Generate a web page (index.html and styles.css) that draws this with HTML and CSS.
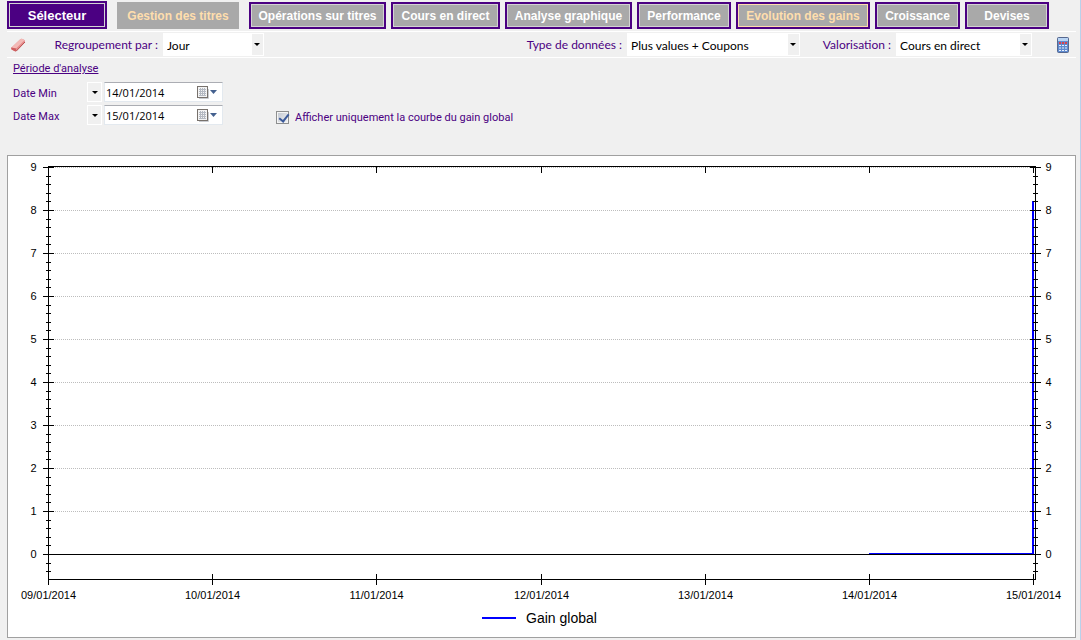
FILE: index.html
```html
<!DOCTYPE html>
<html lang="fr">
<head>
  <meta charset="UTF-8" />
  <meta name="viewport" content="width=device-width, initial-scale=1" />
  <title>Evolution des gains</title>
  <link rel="stylesheet" href="styles.css">
</head>
<body>
  <div class="page">

    <!-- Navigation -->
    <nav class="tabs">
      <button type="button" class="tab tab-main">Sélecteur</button>
      <button type="button" class="tab tab-flat">Gestion des titres</button>
      <button type="button" class="tab tab-operations">Opérations sur titres</button>
      <button type="button" class="tab tab-cours">Cours en direct</button>
      <button type="button" class="tab tab-analyse">Analyse graphique</button>
      <button type="button" class="tab tab-performance">Performance</button>
      <button type="button" class="tab tab-evolution active">Evolution des gains</button>
      <button type="button" class="tab tab-croissance">Croissance</button>
      <button type="button" class="tab tab-devises">Devises</button>
    </nav>

    <!-- Toolbar -->
    <div class="toolbar">
      <button type="button" class="icon-btn" aria-label="Effacer">
        <svg width="16" height="16" viewBox="0 0 16 16">
          <path d="M1 11 L10 2.500 Q11 1.500 12.500 2 L14.500 3 Q15.500 4 14.500 5.500 L7 13.500 Q6 14.500 4.500 14 L1.500 12.500 Z" fill="#e58a8a" />
          <path d="M1.500 10.500 L10 2.500 Q11 1.500 12.500 2 L14.500 3.200 L6 11.500 Z" fill="#f3b9b6" />
          <path d="M1.200 10.500 L6 11.500 L6 14.300 Q5 14.500 4 13.800 L1.500 12.500 Z" fill="#cf5f60" />
          <path d="M6 14.300 L15 5" stroke="#b95050" fill="none" />
        </svg>
      </button>
      <label class="bar-label label-group" for="group">Regroupement par :</label>
      <span class="combo combo-group">
        <select id="group"><option>Jour</option></select>
      </span>
      <label class="bar-label label-type" for="type">Type de données :</label>
      <span class="combo combo-type">
        <select id="type"><option>Plus values + Coupons</option></select>
      </span>
      <label class="bar-label label-value" for="value">Valorisation :</label>
      <span class="combo combo-value">
        <select id="value"><option>Cours en direct</option></select>
      </span>
      <button type="button" class="icon-btn calc" aria-label="Calculer">
        <svg width="12" height="16" viewBox="0 0 12 16">
          <rect x="0.500" y="0.500" width="11" height="15" rx="1" fill="#5f8bd0" stroke="#56688f" />
          <rect x="1" y="1" width="10" height="3" fill="#b9d4f4" />
          <path d="M2 6h2M5 6h2M8 6h2" stroke="#d8434f" stroke-width="2" />
          <path d="M2 8.500h2M5 8.500h2M8 8.500h2M2 11h2M5 11h2M8 11h2M2 13.500h2M5 13.500h2M8 13.500h2" stroke="#e8f0fb" />
        </svg>
      </button>
    </div>

    <!-- Filters -->
    <form class="filters">
      <a href="#" class="period">Période d'analyse</a>
      <div class="filter-row">
        <div class="dates">
          <label for="date-min">Date Min</label>
          <button type="button" class="drop" aria-label="Choix date min"></button>
          <span class="date-box">
            <input type="text" id="date-min" value="14/01/2014" />
            <svg class="date-icon" width="22" height="13" viewBox="0 0 22 13">
              <path d="M2 12.500h9.500V3" stroke="#c9ccd1" fill="none" />
              <rect x="0.500" y="0.500" width="10" height="11" fill="#f4f4f4" stroke="#77716c" />
              <path d="M2 3.500h7M2 5.500h7M2 7.500h7M2 9.500h7M3.500 2v8M5.500 2v8M7.500 2v8" stroke="#b4b9c2" />
              <path d="M13 4h7l-3.500 4z" fill="#44618f" />
            </svg>
          </span>
          <label for="date-max">Date Max</label>
          <button type="button" class="drop" aria-label="Choix date max"></button>
          <span class="date-box">
            <input type="text" id="date-max" value="15/01/2014" />
            <svg class="date-icon" width="22" height="13" viewBox="0 0 22 13">
              <path d="M2 12.500h9.500V3" stroke="#c9ccd1" fill="none" />
              <rect x="0.500" y="0.500" width="10" height="11" fill="#f4f4f4" stroke="#77716c" />
              <path d="M2 3.500h7M2 5.500h7M2 7.500h7M2 9.500h7M3.500 2v8M5.500 2v8M7.500 2v8" stroke="#b4b9c2" />
              <path d="M13 4h7l-3.500 4z" fill="#44618f" />
            </svg>
          </span>
        </div>
        <div class="check">
          <input type="checkbox" id="only-global" checked />
          <label for="only-global">Afficher uniquement la courbe du gain global</label>
        </div>
      </div>
    </form>

    <!-- Chart -->
    <div class="chart">
      <svg id="plot" class="plot"></svg>
      <div class="legend">
        <span class="legend-line"></span>
        <span>Gain global</span>
      </div>
    </div>

  </div>
  <script src="chart.js"></script>
</body>
</html>
```

FILE: styles.css
```css
* {
  box-sizing: border-box;
}
body {
  margin: 0;
  background: #f0f0f0;
  color: #000;
  font-family: "Liberation Sans", Arial, sans-serif;
  font-size: 11px;
}
button, input, select {
  font-family: inherit;
  margin: 0;
}
.page {
  min-height: 100vh;
  padding: 1px 4px 2px 7px;
  border-right: 1px solid #b9d1ea;
}

/* Navigation */
.tabs {
  display: flex;
  gap: 5px;
}
.tab {
  height: 27px;
  margin-top: 1px;
  padding: 0;
  background: #a9a9a9;
  border: 2px solid #4b0082;
  box-shadow: inset 0 0 0 1px #d3d3d3;
  color: #fff;
  font-size: 12px;
  font-weight: bold;
  white-space: nowrap;
}
.tab-main {
  width: 100px;
  height: 28px;
  margin: 0 5px 0 0;
  background: #4b0082;
  font-size: 13px;
}
.tab-flat {
  width: 122px;
  margin-right: 5px;
  border: none;
  box-shadow: none;
  color: #ffdead;
}
.tab-operations {
  width: 137px;
}
.tab-cours {
  width: 109px;
}
.tab-analyse {
  width: 127px;
}
.tab-performance {
  width: 94px;
}
.tab-evolution {
  width: 134px;
}
.tab-croissance {
  width: 85px;
}
.tab-devises {
  width: 84px;
}
.tab.active {
  box-shadow: inset 0 0 0 1px #ffdead;
  color: #ffdead;
}

/* Toolbar */
.toolbar {
  display: flex;
  align-items: center;
  height: 27px;
  margin-top: 2px;
  border-top: 1px solid #fff;
  border-bottom: 1px solid #fff;
  font-family: Lato, "Open Sans", sans-serif;
  font-size: 12px;
}
.icon-btn {
  display: flex;
  padding: 0;
  margin-left: 3px;
  border: none;
  background: none;
}
.calc {
  margin: 0 7px 0 25px;
}
.bar-label {
  color: #4b0082;
  text-align: right;
  white-space: nowrap;
}
.label-group {
  width: 132px;
}
.label-type {
  margin-left: auto;
}
.label-value {
  width: 91px;
}
.combo {
  position: relative;
  height: 23px;
  margin-left: 5px;
  background: #fff;
}
.combo select {
  width: 100%;
  height: 100%;
  padding: 1px 4px 0;
  border: none;
  background: none;
  appearance: none;
  color: #000;
  font-size: 12px;
}
.combo::after {
  content: "";
  position: absolute;
  top: 1px;
  right: 1px;
  width: 11px;
  height: 21px;
  background: #f0f0f0;
  pointer-events: none;
}
.combo::before {
  content: "";
  position: absolute;
  z-index: 1;
  top: 10px;
  right: 4px;
  border: 3px solid transparent;
  border-top-color: #000;
  border-bottom: none;
  pointer-events: none;
}
.combo-group {
  width: 101px;
}
.combo-type {
  width: 173px;
}
.combo-value {
  width: 136px;
}

/* Filters */
.filters {
  height: 97px;
  padding: 3px 6px 0;
  color: #4b0082;
  font-family: Roboto, "Liberation Sans", sans-serif;
}
.period {
  display: block;
  color: #4b0082;
  line-height: 15px;
}
.filter-row {
  display: flex;
  align-items: flex-start;
  gap: 53px;
  margin-top: 6px;
}
.dates {
  display: grid;
  grid-template-columns: 72px 15px 119px;
  column-gap: 2px;
  row-gap: 3px;
  align-items: center;
}
.dates label {
  padding-top: 2px;
}
.drop {
  display: flex;
  align-items: center;
  justify-content: center;
  height: 20px;
  padding: 0;
  border: 1px solid #fff;
  background: #f0f0f0;
}
.drop::before {
  content: "";
  border: 3px solid transparent;
  border-top-color: #000;
  border-bottom: none;
}
.date-box {
  display: flex;
  align-items: center;
  height: 20px;
  padding-right: 3px;
  border: 1px solid #e3e9ef;
  border-top-color: #abadb3;
  background: #fff;
}
.date-box input {
  flex: 1;
  min-width: 0;
  padding: 0 1px;
  border: none;
  background: none;
  font-family: "Open Sans", "Noto Sans", sans-serif;
  font-size: 11px;
}
.check {
  display: flex;
  align-items: center;
  gap: 6px;
  margin-top: 29px;
}
.check input {
  appearance: none;
  display: flex;
  width: 13px;
  height: 13px;
  border: 1px solid #8e8f8f;
  background: linear-gradient(135deg, #c0c6d0, #f4f4f4);
  box-shadow: inset 0 0 0 1px #f4f4f4;
}
.check input:checked::before {
  content: "";
  width: 4px;
  height: 8px;
  margin-left: 4px;
  border: solid #3c5a9a;
  border-width: 0 2px 2px 0;
  transform: rotate(38deg);
}

/* Chart */
.chart {
  border: 1px solid #a0a0a0;
  background: #fff;
}
.plot {
  display: block;
  width: 100%;
  height: 450px;
}
.plot text {
  font-size: 11px;
  text-anchor: middle;
}
.axis {
  stroke: #000;
  fill: none;
}
.grid {
  stroke: #bdbdbd;
  stroke-dasharray: 1 1;
}
.serie {
  fill: none;
  stroke: #00f;
  stroke-width: 2;
}
.legend {
  display: flex;
  align-items: center;
  justify-content: center;
  gap: 10px;
  height: 31px;
  padding: 0 4px 7px 0;
  font-size: 14px;
}
.legend-line {
  width: 34px;
  height: 2px;
  background: #00f;
}
```

FILE: chart.js
```js
const plot = document.getElementById('plot');
const days = ['09/01/2014', '10/01/2014', '11/01/2014', '12/01/2014', '13/01/2014', '14/01/2014', '15/01/2014'];
const gains = [[5, 0], [6, 0], [6, 8.2]];
const maxValue = 9;
const top0 = 11.5;
const unit = 43;
const bottom = 423.5;

function line(cls, x1, y1, x2, y2) {
  return `<line class="${cls}" x1="${x1}" y1="${y1}" x2="${x2}" y2="${y2}" shape-rendering="crispEdges" />`;
}

function draw() {
  const left = 40.5;
  const right = plot.clientWidth - 39.5;
  const xOf = i => Math.floor(left + i * (right - 2 - left) / (days.length - 1)) + 0.5;
  const yOf = v => Math.round(top0 + (maxValue - v) * unit - 0.5) + 0.5;
  let out = '';

  // Horizontal grid
  for (let v = 1; v <= maxValue; v++) {
    out += line('grid', left + 6, yOf(v), right, yOf(v));
  }
  // Gain curve, two pixels wide so it sits on whole pixels
  const points = gains.map(([i, v]) => `${xOf(i) - 0.5},${yOf(v) - 0.5}`).join(' ');
  out += `<polyline class="serie" points="${points}" shape-rendering="crispEdges" />`;

  // Frame and zero line
  out += `<path class="axis" d="M${left} ${bottom}V${top0 - 1}H${right}V${bottom}Z" shape-rendering="crispEdges" />`;
  out += line('axis', left, yOf(0), right, yOf(0));

  // Value axes
  for (let n = -2; n <= maxValue * 5; n++) {
    const y = yOf(n / 5);
    const size = n % 5 === 0 ? 5 : 2;
    out += line('axis', left - size - 0.5, y, left + size + 0.5, y);
    out += line('axis', right - size - 0.5, y, right + size + 0.5, y);
    if (n % 5 === 0) {
      out += `<text x="${left - 15}" y="${y + 3.5}">${n / 5}</text>`;
      out += `<text x="${right + 13}" y="${y + 3.5}">${n / 5}</text>`;
    }
  }
  // Date axis
  days.forEach((day, i) => {
    const x = xOf(i);
    out += line('axis', x, bottom - 5.5, x, bottom + 5.5);
    out += line('axis', x, top0 - 1, x, top0 + 5);
    out += `<text x="${x}" y="443">${day}</text>`;
  });
  plot.innerHTML = out;
}

window.addEventListener('resize', draw);
draw();
```
